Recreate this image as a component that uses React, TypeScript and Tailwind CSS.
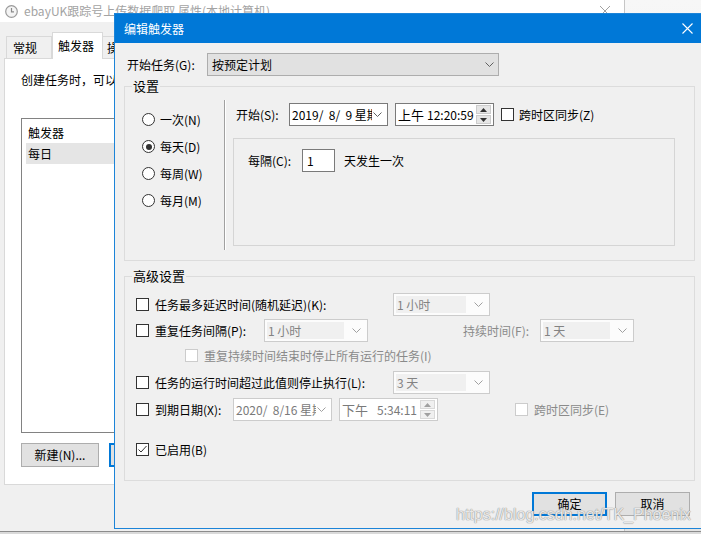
import React from "react";

const Check = ({ checked = false, disabled = false }: { checked?: boolean; disabled?: boolean }) => (
  <span
    className={`flex h-[13px] w-[13px] shrink-0 items-center justify-center border bg-white ${
      disabled ? "border-[#cccccc]" : "border-[#333333]"
    }`}
  >
    {checked ? (
      <svg width="11" height="11" viewBox="0 0 11 11">
        <path d="M1.5 5.5 L4 8 L9.5 2" fill="none" stroke="#333" strokeWidth="1" />
      </svg>
    ) : null}
  </span>
);

const Radio = ({ on = false, label }: { on?: boolean; label: string }) => (
  <div className="flex h-[27px] items-center">
    <span className="flex h-[13px] w-[13px] items-center justify-center rounded-full border border-[#333333] bg-white">
      {on ? <span className="h-[6px] w-[6px] rounded-full bg-[#333333]" /> : null}
    </span>
    <span className="ml-[5px]">{label}</span>
  </div>
);

const Chevron = ({ color = "#606060" }: { color?: string }) => (
  <svg width="9" height="5" viewBox="0 0 9 5">
    <path d="M0.5 0.5 L4.5 4.5 L8.5 0.5" fill="none" stroke={color} strokeWidth="1" />
  </svg>
);

const Spin = ({ light = false }: { light?: boolean }) => (
  <div className="flex w-[15px] flex-col gap-[1px]">
    <span
      className={`flex h-[9px] items-center justify-center border ${
        light ? "border-[#d9d9d9] bg-[#f0f0f0]" : "border-[#cccccc] bg-[#e6e6e6]"
      }`}
    >
      <svg width="7" height="4" viewBox="0 0 7 4">
        <path d="M0 4 L3.5 0 L7 4 Z" fill={light ? "#a0a0a0" : "#333"} />
      </svg>
    </span>
    <span
      className={`flex h-[9px] items-center justify-center border ${
        light ? "border-[#d9d9d9] bg-[#f0f0f0]" : "border-[#cccccc] bg-[#e6e6e6]"
      }`}
    >
      <svg width="7" height="4" viewBox="0 0 7 4">
        <path d="M0 0 L3.5 4 L7 0 Z" fill={light ? "#a0a0a0" : "#333"} />
      </svg>
    </span>
  </div>
);

const Combo = ({ w, text }: { w: string; text: string }) => (
  <div className={`flex h-[23px] ${w} shrink-0 items-center border border-[#cccccc] bg-[#fcfcfc] pl-[2px] pr-[6px]`}>
    <span className="flex h-[17px] flex-1 items-center bg-[#f0f0f0] pl-[1px] text-[#838383]">{text}</span>
    <span className="ml-[8px]">
      <Chevron color="#a0a0a0" />
    </span>
  </div>
);

export default function App() {
  return (
    <div className="relative h-[534px] w-[701px] overflow-hidden bg-[#cfcfcf] font-['Microsoft_YaHei_UI','Noto_Sans_CJK_SC','Noto_Sans',sans-serif] text-[12px] leading-[16px] text-black">
      {/* window behind, right side */}
      <div className="absolute left-[625px] top-0 h-[534px] w-[76px] bg-gradient-to-b from-[#f7f7f7] to-[#e4e4e4]" />

      {/* background properties window */}
      <div className="absolute left-0 top-0 flex h-[531px] w-[625px] flex-col border-r border-[#c6c6c6] bg-[#f0f0f0]">
        <div className="flex h-[22px] shrink-0 items-center bg-white">
          <svg className="ml-[5px]" width="13" height="13" viewBox="0 0 13 13">
            <circle cx="6.5" cy="6.5" r="5.8" fill="#f4f4f4" stroke="#9a9a9a" strokeWidth="1.2" />
            <path d="M6.5 3 V6.8 H9" fill="none" stroke="#8a8a8a" strokeWidth="1.2" />
          </svg>
          <span className="ml-[6px] whitespace-nowrap text-[#a3a3a3]">ebayUK跟踪号上传数据爬取 属性(本地计算机)</span>
          <svg className="ml-auto mr-[14px] shrink-0" width="10" height="10" viewBox="0 0 10 10">
            <path d="M0 0 L10 10 M10 0 L0 10" stroke="#a0a0a0" strokeWidth="1" />
          </svg>
        </div>

        <div className="flex h-[36px] shrink-0 items-end pl-[6px]">
          <div className="flex h-[22px] w-[46px] items-center border border-b-0 border-[#d9d9d9] bg-[#f0f0f0] pl-[6px]">常规</div>
          <div className="relative z-10 -mb-[1px] flex h-[27px] w-[51px] items-center border border-b-0 border-[#d9d9d9] bg-white pl-[5px]">
            触发器
          </div>
          <div className="flex h-[22px] w-[60px] items-center border border-b-0 border-l-0 border-[#d9d9d9] bg-[#f0f0f0] pl-[4px]">
            操作
          </div>
        </div>

        <div className="mx-[4px] h-[427px] border border-[#d9d9d9] bg-white pl-[16px] pt-[13px]">
          <div className="h-[16px] whitespace-nowrap">创建任务时，可以使用多种条件来触发任务。</div>
          <div className="mt-[30px] h-[315px] w-[560px] border border-[#828282] bg-white pt-[4px]">
            <div className="h-[20px] pl-[6px] leading-[20px]">触发器</div>
            <div className="ml-[4px] h-[21px] bg-[#e5e5e5] pl-[2px] leading-[21px]">每日</div>
          </div>
          <div className="mt-[10px] flex gap-[10px]">
            <div className="flex h-[24px] w-[78px] items-center justify-center border border-[#adadad] bg-[#e1e1e1]">新建(N)...</div>
            <div className="flex h-[24px] w-[78px] items-center justify-center border-2 border-[#0078d7] bg-[#e1e1e1]">编辑(E)...</div>
          </div>
        </div>
      </div>

      {/* bottom strip of a window further behind */}
      <div className="absolute left-0 top-[531px] h-[3px] w-[701px] border-t border-[#8c8c8c] bg-[#dadada]" />

      {/* edit trigger dialog */}
      <div className="absolute left-[114px] top-[13px] flex h-[516px] w-[600px] flex-col border border-[#1c84d8] bg-[#f0f0f0]">
        <div className="flex h-[29px] shrink-0 items-center bg-[#0078d7] text-white">
          <span className="ml-[9px] whitespace-nowrap">编辑触发器</span>
          <svg className="ml-auto mr-[20px] shrink-0" width="11" height="11" viewBox="0 0 11 11">
            <path d="M0.5 0.5 L10.5 10.5 M10.5 0.5 L0.5 10.5" stroke="white" strokeWidth="1.1" />
          </svg>
        </div>

        <div className="pl-[9px] pt-[10px]">
          <div className="flex h-[23px] items-center">
            <span className="ml-[3px] w-[80px]">开始任务(G):</span>
            <div className="flex h-[23px] w-[292px] items-center border border-[#adadad] bg-[#e1e1e1] pl-[4px] pr-[4px]">
              <span className="flex-1">按预定计划</span>
              <Chevron />
            </div>
          </div>

          {/* 设置 */}
          <div className="relative mt-[10px] flex h-[175px] w-[571px] items-start border border-[#dcdcdc]">
            <span className="absolute -top-[9px] left-[7px] bg-[#f0f0f0] px-[1px] text-[13px]">设置</span>
            <div className="w-[99px] pl-[17px] pt-[19px]">
              <Radio label="一次(N)" />
              <Radio on label="每天(D)" />
              <Radio label="每周(W)" />
              <Radio label="每月(M)" />
            </div>
            <div className="mt-[13px] h-[150px] w-[2px] border-l border-r border-l-[#a0a0a0] border-r-white" />
            <div className="pl-[7px] pt-[16px]">
              <div className="ml-[3px] flex h-[23px] items-center">
                <span className="w-[53px]">开始(S):</span>
                <div className="flex h-[23px] w-[99px] items-center border border-[#7a7a7a] bg-white pl-[2px] pr-[5px]">
                  <span className="w-[80px] overflow-hidden whitespace-pre">2019/  8/  9 星期五</span>
                  <span className="ml-auto">
                    <Chevron />
                  </span>
                </div>
                <div className="ml-[7px] flex h-[23px] w-[99px] items-center border border-[#7a7a7a] bg-white pl-[2px] pr-[2px]">
                  <span className="text-[13px]">上午</span>
                  <span className="ml-[3px]">12:20:59</span>
                  <span className="ml-auto">
                    <Spin />
                  </span>
                </div>
                <span className="ml-[7px]">
                  <Check />
                </span>
                <span className="ml-[5px]">跨时区同步(Z)</span>
              </div>
              <div className="mt-[12px] h-[108px] w-[442px] border border-[#d5d5d5] pl-[14px] pt-[10px]">
                <div className="flex h-[23px] items-center">
                  <span className="w-[54px]">每隔(C):</span>
                  <div className="flex h-[23px] w-[33px] items-center border border-[#7a7a7a] bg-white pl-[4px]">1</div>
                  <span className="ml-[9px]">天发生一次</span>
                </div>
              </div>
            </div>
          </div>

          {/* 高级设置 */}
          <div className="relative mt-[15px] h-[205px] w-[571px] border border-[#dcdcdc] pl-[11px] pt-[16px]">
            <span className="absolute -top-[9px] left-[7px] bg-[#f0f0f0] px-[1px] text-[13px]">高级设置</span>
            <div className="flex h-[23px] items-center">
              <Check />
              <span className="ml-[6px] w-[238px]">任务最多延迟时间(随机延迟)(K):</span>
              <Combo w="w-[97px]" text="1 小时" />
            </div>
            <div className="mt-[3px] flex h-[23px] items-center">
              <Check />
              <span className="ml-[6px] w-[109px]">重复任务间隔(P):</span>
              <Combo w="w-[104px]" text="1 小时" />
              <span className="ml-[95px] w-[77px] text-[#8a8a8a]">持续时间(F):</span>
              <Combo w="w-[94px]" text="1 天" />
            </div>
            <div className="mt-[2px] flex h-[23px] items-center pl-[49px]">
              <Check disabled />
              <span className="ml-[6px] text-[#8a8a8a]">重复持续时间结束时停止所有运行的任务(I)</span>
            </div>
            <div className="mt-[4px] flex h-[23px] items-center">
              <Check />
              <span className="ml-[6px] w-[238px]">任务的运行时间超过此值则停止执行(L):</span>
              <Combo w="w-[97px]" text="3 天" />
            </div>
            <div className="mt-[4px] flex h-[23px] items-center">
              <Check />
              <span className="ml-[6px] w-[78px]">到期日期(X):</span>
              <div className="flex h-[23px] w-[99px] items-center border border-[#cccccc] bg-white pl-[2px] pr-[5px] text-[#7a7a7a]">
                <span className="w-[80px] overflow-hidden whitespace-pre">2020/  8/16 星期日</span>
                <span className="ml-auto">
                  <Chevron color="#a0a0a0" />
                </span>
              </div>
              <div className="ml-[7px] flex h-[23px] w-[99px] items-center border border-[#cccccc] bg-white pl-[2px] pr-[2px] text-[#7a7a7a]">
                <span className="text-[13px]">下午</span>
                <span className="ml-[9px]">5:34:11</span>
                <span className="ml-auto">
                  <Spin light />
                </span>
              </div>
              <span className="ml-[77px]">
                <Check disabled />
              </span>
              <span className="ml-[6px] text-[#8a8a8a]">跨时区同步(E)</span>
            </div>
            <div className="mt-[17px] flex h-[23px] items-center">
              <Check checked />
              <span className="ml-[6px]">已启用(B)</span>
            </div>
          </div>

          <div className="ml-[408px] mt-[11px] flex gap-[8px]">
            <div className="flex h-[24px] w-[75px] items-center justify-center border-2 border-[#0078d7] bg-[#e1e1e1]">确定</div>
            <div className="flex h-[24px] w-[75px] items-center justify-center border border-[#adadad] bg-[#e1e1e1]">取消</div>
          </div>
        </div>
      </div>

      {/* watermark */}
      <div className="absolute left-[456px] top-[505px] font-['Liberation_Sans',sans-serif] text-[16px] leading-[20px] text-white/80 [text-shadow:0_0_1px_#8a8a8a,0_0_1px_#8a8a8a]">
        https://blog.csdn.net/TK_Phoenix
      </div>
    </div>
  );
}
